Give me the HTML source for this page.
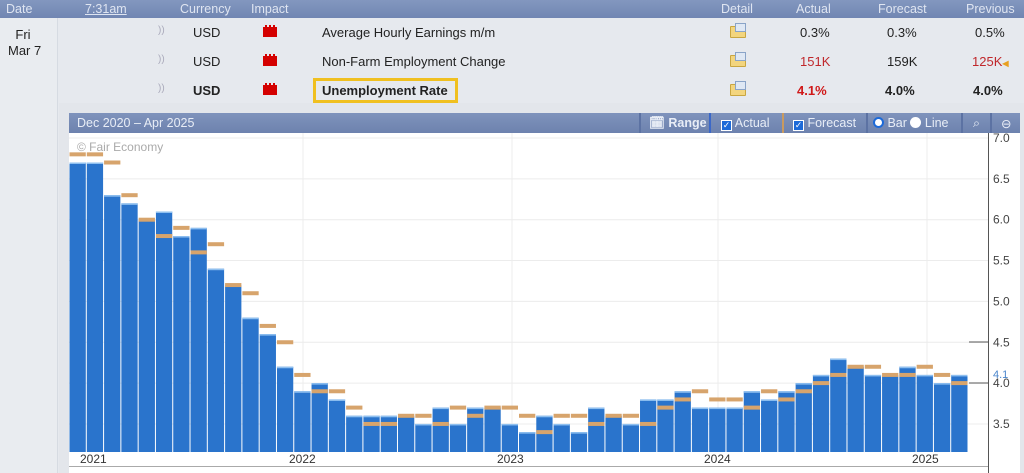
<!DOCTYPE html>
<html><head><meta charset="utf-8"><style>
*{margin:0;padding:0;box-sizing:border-box}
body{width:1024px;height:473px;overflow:hidden;background:#e6e9ee;font-family:"Liberation Sans",Verdana,sans-serif;font-size:12px;color:#222;position:relative}
.hd{position:absolute;left:0;top:0;width:1024px;height:18px;background:linear-gradient(#8397bf,#7186b2);color:#dfe5f1;font-size:12.5px}
.hd span,.row span{position:absolute;top:2px}
.row{position:absolute;left:0;width:1024px;height:29px;font-size:13px}
.row span{top:7px}
.left{position:absolute;left:0;top:18px;width:58px;height:455px;background:#e9ecf0;border-right:1px solid #d6dbe2}
.imp{position:absolute;width:14px;height:10px;background:#d40000;top:9px;left:263px}
.imp:before{content:"";position:absolute;left:2px;top:-2px;width:10px;height:2px;background:linear-gradient(90deg,#d40000 0 2px,transparent 2px 4px,#d40000 4px 6px,transparent 6px 8px,#d40000 8px)}
.fold{position:absolute;left:730px;top:8px;width:16px;height:12px;background:#f3d57e;border:1px solid #c9a640;border-radius:1px}
.fold:after{content:"";position:absolute;left:4px;top:-4px;width:9px;height:7px;background:#dfe8f4;border:1px solid #8aa4c8}
.snd{position:absolute;left:158px;color:#aab;font-size:10px}
.ch{position:absolute;left:69px;top:113px;width:951px;height:20px;background:linear-gradient(#7f93bc,#6d82ae);color:#e8edf6;font-size:12.5px}
.ch span{position:absolute;top:3px}
.sep{position:absolute;top:0;width:2px;height:20px;background:#5c72a3}
.cb{display:inline-block;width:11px;height:11px;background:#1d6ad8;border:1px solid #fff;vertical-align:-1px;color:#fff;font-size:9px;line-height:9px;text-align:center;font-style:normal}
</style></head><body>
<div class="hd"><span style="left:6px">Date</span><span style="left:85px;text-decoration:underline">7:31am</span><span style="left:180px">Currency</span><span style="left:251px">Impact</span><span style="left:721px">Detail</span><span style="left:796px">Actual</span><span style="left:878px">Forecast</span><span style="left:966px">Previous</span></div>
<div class="left"><div style="position:absolute;left:8px;top:9px;width:30px;font-size:13px;text-align:center;line-height:16px;font-weight:normal">Fri<br>Mar&nbsp;7</div></div>
<div class="row" style="top:18px"><span class="snd">))</span><span style="left:193px">USD</span><div class="imp"></div><span style="left:322px">Average Hourly Earnings m/m</span><div class="fold"></div><span style="left:800px">0.3%</span><span style="left:887px">0.3%</span><span style="left:975px">0.5%</span></div>
<div class="row" style="top:47px"><span class="snd">))</span><span style="left:193px">USD</span><div class="imp"></div><span style="left:322px">Non-Farm Employment Change</span><div class="fold"></div><span style="left:800px;color:#c0282c">151K</span><span style="left:887px">159K</span><span style="left:972px;color:#c0282c">125K<b style="color:#e8a020;font-size:8px">◀</b></span></div>
<div class="row" style="top:76px;font-weight:bold"><span class="snd" style="font-weight:normal">))</span><span style="left:193px">USD</span><div class="imp"></div><div style="position:absolute;left:313px;top:2px;width:145px;height:25px;border:3px solid #f0c020"></div><span style="left:322px">Unemployment Rate</span><div class="fold"></div><span style="left:797px;color:#d01818">4.1%</span><span style="left:885px">4.0%</span><span style="left:973px">4.0%</span></div>
<div style="position:absolute;left:59px;top:103px;width:965px;height:370px;background:#e3e6eb"></div>
<div style="position:absolute;left:69px;top:133px;width:951px;height:340px;background:#fff"></div>
<div class="ch"><span style="left:8px">Dec 2020 – Apr 2025</span>
<div class="sep" style="left:570px"></div><span style="left:580px;font-weight:bold">🗓 Range</span>
<div class="sep" style="left:640px;background:#3b68c8"></div><span style="left:652px"><i class="cb">✓</i> Actual</span>
<div class="sep" style="left:713px;background:#c89a60"></div><span style="left:724px"><i class="cb">✓</i> Forecast</span>
<div class="sep" style="left:797px"></div><span style="left:804px"><i style="display:inline-block;width:11px;height:11px;border:2px solid #1d6ad8;border-radius:50%;background:#fff;vertical-align:-1px"></i> Bar <i style="display:inline-block;width:11px;height:11px;border-radius:50%;background:#fff;vertical-align:-1px"></i> Line</span>
<div class="sep" style="left:892px"></div><span style="left:904px">⌕</span><div class="sep" style="left:921px"></div><span style="left:932px">⊖</span></div>
<svg id="c" width="1024" height="473" style="position:absolute;left:0;top:0"></svg>
<script>
var A=[6.7,6.7,6.3,6.2,6.0,6.1,5.8,5.9,5.4,5.2,4.8,4.6,4.2,3.9,4.0,3.8,3.6,3.6,3.6,3.6,3.5,3.7,3.5,3.7,3.7,3.5,3.4,3.6,3.5,3.4,3.7,3.6,3.5,3.8,3.8,3.9,3.7,3.7,3.7,3.9,3.8,3.9,4.0,4.1,4.3,4.2,4.1,4.1,4.2,4.1,4.0,4.1];
var F=[6.8,6.8,6.7,6.3,6.0,5.8,5.9,5.6,5.7,5.2,5.1,4.7,4.5,4.1,3.9,3.9,3.7,3.5,3.5,3.6,3.6,3.5,3.7,3.6,3.7,3.7,3.6,3.4,3.6,3.6,3.5,3.6,3.6,3.5,3.7,3.8,3.9,3.8,3.8,3.7,3.9,3.8,3.9,4.0,4.1,4.2,4.2,4.1,4.1,4.2,4.1,4.0];
function y(v){return 138+(7-v)*81.7}
var s='';
for(var v=7;v>=3.5;v-=0.5){var yy=y(v);s+='<line x1="69" x2="988" y1="'+yy+'" y2="'+yy+'" stroke="#ececec"/><text x="993" y="'+(yy+4)+'" font-size="12" fill="#444" font-family="Liberation Sans">'+v.toFixed(1)+'</text>';}
[303,512,718,927].forEach(function(x){s+='<line x1="'+x+'" x2="'+x+'" y1="133" y2="466" stroke="#ececec"/>'});
var w=899/52;
for(var i=0;i<52;i++){var x=69+i*w,t=y(A[i]);s+='<rect x="'+(x+0.5)+'" y="'+t+'" width="'+(w-1)+'" height="'+(452-t)+'" fill="#2a74cc"/><rect x="'+(x+0.5)+'" y="'+t+'" width="'+(w-1)+'" height="1.5" fill="#8fc0f0"/>';}
for(var i=0;i<52;i++){var x=69+i*w;s+='<rect x="'+(x+0.5)+'" y="'+(y(F[i])-2)+'" width="'+(w-1)+'" height="4" fill="#d7a46c"/>';}
s+='<line x1="988.5" x2="988.5" y1="133" y2="473" stroke="#555"/><line x1="969" x2="988" y1="383" y2="383" stroke="#555"/><line x1="969" x2="988" y1="342" y2="342" stroke="#555"/>';
s+='<text x="993" y="378" font-size="11" fill="#4a86cc" font-family="Liberation Sans">4.1</text>';
s+='<rect x="69" y="452" width="919" height="14" fill="#fff"/><line x1="69" x2="988" y1="466.5" y2="466.5" stroke="#aaa"/>';
[['2021',80],['2022',289],['2023',497],['2024',704],['2025',912]].forEach(function(a){s+='<text x="'+a[1]+'" y="463" font-size="12" fill="#333" font-family="Liberation Sans">'+a[0]+'</text>'});
s+='<text x="77" y="151" font-size="12" fill="#aaa" font-family="Liberation Sans">© Fair Economy</text>';
document.getElementById('c').innerHTML=s;
</script>
</body></html>
